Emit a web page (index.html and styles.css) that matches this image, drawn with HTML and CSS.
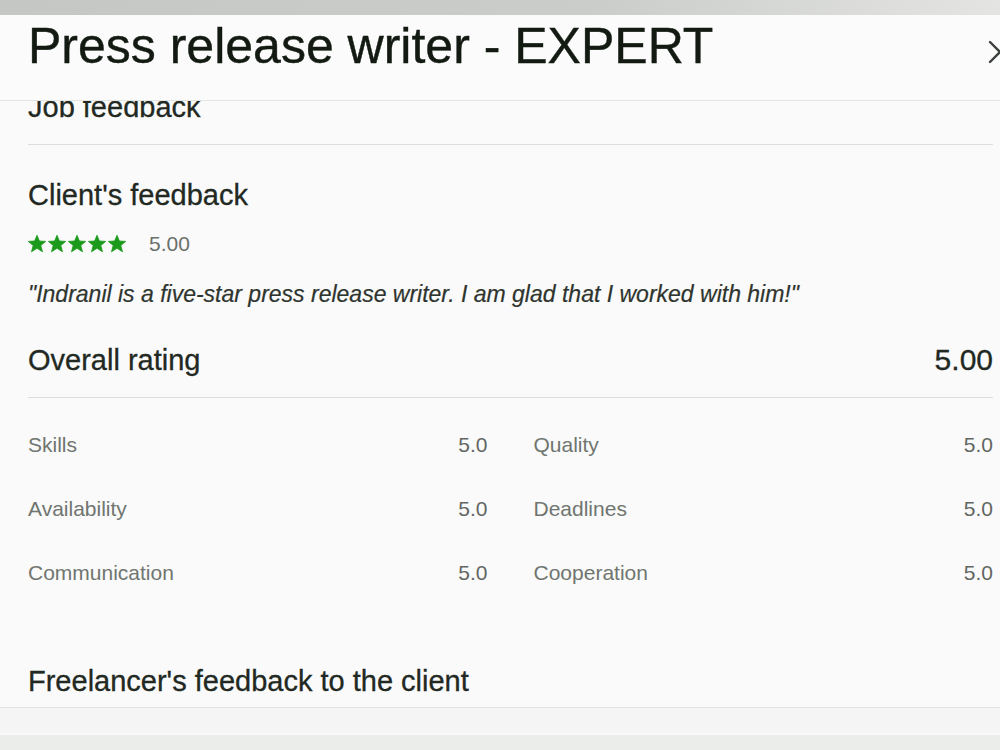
FILE: index.html
```html
<!DOCTYPE html>
<html lang="en">
<head>
    <meta charset="UTF-8">
    <meta name="viewport" content="width=device-width, initial-scale=1.0">
    <title>Press release writer - EXPERT</title>
    <link rel="stylesheet" href="styles.css">
</head>
<body>
    <div class="top-strip"></div>

    <div class="modal">
        <header class="modal-header">
            <h1 class="modal-title">Press release writer - EXPERT</h1>
            <button class="close" title="Close">
                <svg width="26" height="26" viewBox="0 0 26 26">
                    <path d="M3 3 L23 23 M23 3 L3 23" stroke="#3c403c" stroke-width="2.4" stroke-linecap="round" fill="none"/>
                </svg>
            </button>
        </header>

        <div class="modal-body">
            <div class="scroll-area">
                <h2 class="section-title job-title">Job feedback</h2>
                <hr class="divider">

                <h2 class="section-title client-title">Client's feedback</h2>
                <div class="stars-row">
                    <svg class="stars" width="98" height="18" viewBox="0 0 98 18">
                        <defs>
                            <polygon id="star" points="9,0.3 11.4,6 17.7,6.4 12.8,10.4 14.5,16.8 9,13.3 3.5,16.8 5.2,10.4 0.3,6.4 6.6,6" stroke-linejoin="round"/>
                        </defs>
                        <use href="#star" x="0" fill="#1c9a1c" stroke="#1c9a1c" stroke-width="0.8"/>
                        <use href="#star" x="20" fill="#1c9a1c" stroke="#1c9a1c" stroke-width="0.8"/>
                        <use href="#star" x="40" fill="#1c9a1c" stroke="#1c9a1c" stroke-width="0.8"/>
                        <use href="#star" x="60" fill="#1c9a1c" stroke="#1c9a1c" stroke-width="0.8"/>
                        <use href="#star" x="80" fill="#1c9a1c" stroke="#1c9a1c" stroke-width="0.8"/>
                    </svg>
                    <span class="stars-score">5.00</span>
                </div>
                <p class="quote">"Indranil is a five-star press release writer. I am glad that I worked with him!"</p>

                <div class="overall">
                    <span>Overall rating</span>
                    <span>5.00</span>
                </div>

                <div class="scores">
                    <div class="score"><span class="score-label">Skills</span><span class="score-value">5.0</span></div>
                    <div class="score"><span class="score-label">Quality</span><span class="score-value">5.0</span></div>
                    <div class="score"><span class="score-label">Availability</span><span class="score-value">5.0</span></div>
                    <div class="score"><span class="score-label">Deadlines</span><span class="score-value">5.0</span></div>
                    <div class="score"><span class="score-label">Communication</span><span class="score-value">5.0</span></div>
                    <div class="score"><span class="score-label">Cooperation</span><span class="score-value">5.0</span></div>
                </div>

                <h2 class="section-title freelancer-title">Freelancer's feedback to the client</h2>
            </div>
        </div>
        <div class="modal-footer"></div>
    </div>
</body>
</html>
```

FILE: styles.css
```css
* {
    margin: 0;
    padding: 0;
    box-sizing: border-box;
}

body {
    font-family: 'Liberation Sans', Arial, sans-serif;
    background: #ebedeb;
    width: 1000px;
    height: 750px;
    overflow: hidden;
    color: #222822;
}

.top-strip {
    height: 15px;
    background: linear-gradient(90deg, #c5c7c4 0%, #cbcdca 60%, #e4e5e3 100%);
}

.modal {
    background: #f9faf9;
    height: 720px;
    display: flex;
    flex-direction: column;
}

.modal-header {
    height: 86px;
    padding: 1px 0 0 28px;
    display: flex;
    justify-content: space-between;
    align-items: flex-start;
    border-bottom: 1px solid #e3e5e3;
    background: #fafbfa;
    position: relative;
    z-index: 1;
}

.modal-title {
    font-size: 50px;
    line-height: 60px;
    font-weight: 400;
    color: #121a12;
    -webkit-text-stroke: 0.4px #121a12;
}

.close {
    background: none;
    border: none;
    margin-top: 23px;
    margin-right: -13px;
    width: 26px;
    height: 26px;
    cursor: pointer;
}

.modal-body {
    overflow: hidden;
    padding: 0 7px 0 28px;
}

/* body is scrolled down a little, so the first heading hides under the header */
.scroll-area {
    margin-top: -12px;
}

.section-title {
    font-size: 29px;
    line-height: 36px;
    font-weight: 400;
    color: #222822;
    -webkit-text-stroke: 0.3px #222822;
}

.divider {
    border: none;
    border-top: 1px solid #dcdfdc;
    margin-top: 19px;
}

.client-title {
    margin-top: 32px;
}

.stars-row {
    margin-top: 19px;
    height: 24px;
    display: flex;
    align-items: center;
    gap: 23px;
}

.stars {
    display: block;
}

.stars-score {
    font-size: 21px;
    color: #6c706c;
}

.quote {
    margin-top: 24px;
    font-size: 23px;
    line-height: 28px;
    font-style: italic;
    color: #2e342e;
    -webkit-text-stroke: 0.2px #2e342e;
}

.overall {
    margin-top: 32px;
    display: flex;
    justify-content: space-between;
    font-size: 29px;
    line-height: 40px;
    padding-bottom: 17px;
    border-bottom: 1px solid #dcdfdc;
    -webkit-text-stroke: 0.3px #222822;
}

.overall span:last-child {
    font-size: 30px;
}

.scores {
    margin-top: 15px;
    display: grid;
    grid-template-columns: 1fr 1fr;
    grid-auto-rows: 64px;
    column-gap: 46px;
}

.score {
    display: flex;
    justify-content: space-between;
    align-items: center;
    font-size: 21px;
}

.score-label {
    color: #707570;
}

.score-value {
    color: #626662;
}

.freelancer-title {
    margin-top: 58px;
}

.modal-footer {
    margin-top: 8px;
    border-top: 1px solid #e0e2e0;
    height: 26px;
    background: #f4f5f4;
}
```
